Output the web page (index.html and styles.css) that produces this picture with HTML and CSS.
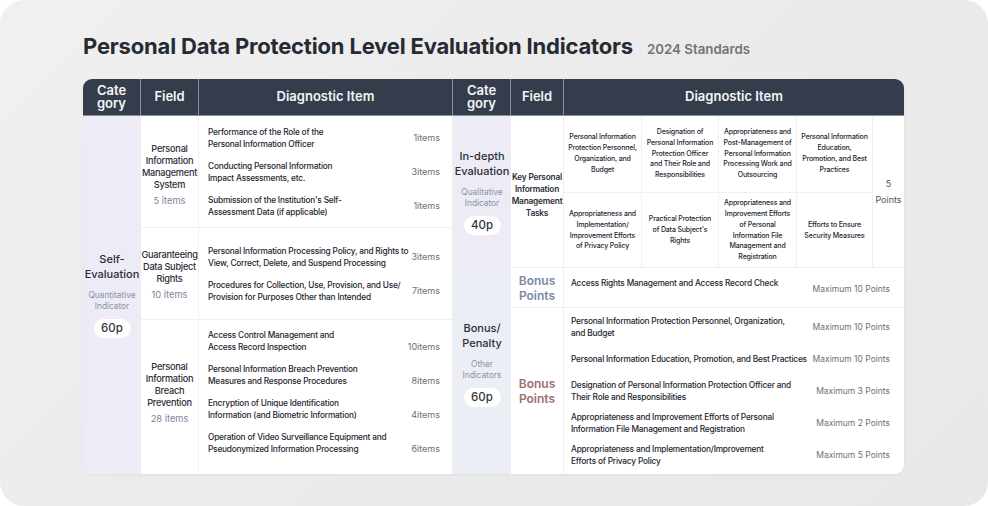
FILE: index.html
```html
<!DOCTYPE html>
<html>
<head>
<meta charset="utf-8">
<link rel="stylesheet" href="styles.css">
</head>
<body>
<div class="frame">
  <div class="title-row">
    <h1 class="title">Personal Data Protection Level Evaluation Indicators</h1>
    <span class="subtitle">2024 Standards</span>
  </div>
  <div class="sheet">
    <div class="half half-left">
      <div class="hcell">Cate<br>gory</div>
      <div class="hcell">Field</div>
      <div class="hcell hcell-last">Diagnostic Item</div>

      <div class="cat cat-self">
        <div class="cat-name">Self-<br>Evaluation</div>
        <div class="cat-sub">Quantitative<br>Indicator</div>
        <div class="pill">60p</div>
      </div>

      <div class="field g1">
        <div class="field-name">Personal<br>Information<br>Management<br>System</div>
        <div class="field-count">5 items</div>
      </div>
      <div class="diag g1">
        <div class="item"><span>Performance of the Role of the<br>Personal Information Officer</span><span class="cnt">1items</span></div>
        <div class="item"><span>Conducting Personal Information<br>Impact Assessments, etc.</span><span class="cnt">3items</span></div>
        <div class="item"><span>Submission of the Institution's Self-<br>Assessment Data (if applicable)</span><span class="cnt">1items</span></div>
      </div>

      <div class="field g2">
        <div class="field-name">Guaranteeing<br>Data Subject<br>Rights</div>
        <div class="field-count">10 items</div>
      </div>
      <div class="diag g2">
        <div class="item"><span>Personal Information Processing Policy, and Rights to<br>View, Correct, Delete, and Suspend Processing</span><span class="cnt">3items</span></div>
        <div class="item"><span>Procedures for Collection, Use, Provision, and Use/<br>Provision for Purposes Other than Intended</span><span class="cnt">7items</span></div>
      </div>

      <div class="field g3">
        <div class="field-name">Personal<br>Information<br>Breach<br>Prevention</div>
        <div class="field-count">28 items</div>
      </div>
      <div class="diag g3">
        <div class="item item-end"><span>Access Control Management and<br>Access Record Inspection</span><span class="cnt">10items</span></div>
        <div class="item item-end"><span>Personal Information Breach Prevention<br>Measures and Response Procedures</span><span class="cnt">8items</span></div>
        <div class="item item-end"><span>Encryption of Unique Identification<br>Information (and Biometric Information)</span><span class="cnt">4items</span></div>
        <div class="item item-end"><span>Operation of Video Surveillance Equipment and<br>Pseudonymized Information Processing</span><span class="cnt">6items</span></div>
      </div>
    </div>

    <div class="half half-right">
      <div class="hcell">Cate<br>gory</div>
      <div class="hcell">Field</div>
      <div class="hcell hcell-last">Diagnostic Item</div>

      <div class="cat cat-deep">
        <div class="cat-name">In-depth<br>Evaluation</div>
        <div class="cat-sub">Qualitative<br>Indicator</div>
        <div class="pill">40p</div>
      </div>
      <div class="field r1">
        <div class="field-name field-small">Key Personal<br>Information<br>Management<br>Tasks</div>
      </div>
      <div class="matrix r1">
        <div class="mcell">Personal Information<br>Protection Personnel,<br>Organization, and<br>Budget</div>
        <div class="mcell">Designation of<br>Personal Information<br>Protection Officer<br>and Their Role and<br>Responsibilities</div>
        <div class="mcell">Appropriateness and<br>Post-Management of<br>Personal Information<br>Processing Work and<br>Outsourcing</div>
        <div class="mcell">Personal Information<br>Education,<br>Promotion, and Best<br>Practices</div>
        <div class="mcell mpoints">5<br>Points</div>
        <div class="mcell">Appropriateness and<br>Implementation/<br>Improvement Efforts<br>of Privacy Policy</div>
        <div class="mcell">Practical Protection<br>of Data Subject's<br>Rights</div>
        <div class="mcell">Appropriateness and<br>Improvement Efforts<br>of Personal<br>Information File<br>Management and<br>Registration</div>
        <div class="mcell">Efforts to Ensure<br>Security Measures</div>
      </div>

      <div class="cat cat-bonus">
        <div class="cat-name">Bonus/<br>Penalty</div>
        <div class="cat-sub">Other<br>Indicators</div>
        <div class="pill">60p</div>
      </div>
      <div class="field r2">
        <div class="pts-label pts-plus">Bonus<br>Points</div>
      </div>
      <div class="diag r2">
        <div class="bitem bitem-top"><span>Access Rights Management and Access Record Check</span><span class="max">Maximum 10 Points</span></div>
      </div>
      <div class="field r3">
        <div class="pts-label pts-minus">Bonus<br>Points</div>
      </div>
      <div class="diag r3">
        <div class="bitem"><span>Personal Information Protection Personnel, Organization,<br>and Budget</span><span class="max">Maximum 10 Points</span></div>
        <div class="bitem"><span>Personal Information Education, Promotion, and Best Practices</span><span class="max">Maximum 10 Points</span></div>
        <div class="bitem"><span>Designation of Personal Information Protection Officer and<br>Their Role and Responsibilities</span><span class="max">Maximum 3 Points</span></div>
        <div class="bitem"><span>Appropriateness and Improvement Efforts of Personal<br>Information File Management and Registration</span><span class="max">Maximum 2 Points</span></div>
        <div class="bitem"><span>Appropriateness and Implementation/Improvement<br>Efforts of Privacy Policy</span><span class="max">Maximum 5 Points</span></div>
      </div>
    </div>
  </div>
</div>
</body>
</html>
```

FILE: styles.css
```css
* { box-sizing: border-box; }
html, body { margin: 0; padding: 0; background: #ffffff; }
body { font-family: Inter, "Noto Sans", sans-serif; color: #2a2e37; }

.frame {
  width: 988px;
  height: 506px;
  border-radius: 24px;
  background: linear-gradient(135deg, #f0f0f0 0%, #eaeaea 60%, #e8e8e8 100%);
  padding: 33px 84px 32px 83px;
}

.title-row {
  display: flex;
  align-items: baseline;
  gap: 14px;
  height: 27px;
  margin-bottom: 19px;
}
.title {
  margin: 0;
  font-size: 22px;
  font-weight: 700;
  letter-spacing: -0.18px;
  color: #262a33;
  line-height: 27px;
}
.subtitle {
  font-size: 13.3px;
  font-weight: 600;
  color: #737373;
}

.sheet {
  display: flex;
  width: 821px;
  height: 395px;
  background: #fff;
  border-radius: 9px;
  overflow: hidden;
  box-shadow: 0 1px 3px rgba(0,0,0,0.05);
}

.half { display: grid; }
.half-left {
  width: 370px;
  grid-template-columns: 58px 58px 254px;
  grid-template-rows: 37px 112px 92px 154px;
}
.half-right {
  width: 451px;
  grid-template-columns: 58px 53px 340px;
  grid-template-rows: 37px 152px 40px 166px;
}

.hcell {
  background: #353d4c;
  color: #f4f5f7;
  font-size: 13px;
  font-weight: 600;
  line-height: 13.5px;
  display: flex;
  align-items: center;
  justify-content: center;
  text-align: center;
  border-right: 1px solid #8a909b;
  border-bottom: 1px solid #8a909b;
}
.half-right .hcell-last { border-right: none; }

.cat {
  display: flex;
  flex-direction: column;
  align-items: center;
  justify-content: center;
  text-align: center;
}
.cat-self { grid-row: 2 / 5; background: #ecebf6; }
.cat-deep { grid-row: 2 / 3; background: #ecebf6; }
.cat-bonus { grid-row: 3 / 5; background: #ebeef4; padding-bottom: 15px; }
.cat-name {
  font-size: 11px;
  font-weight: 500;
  line-height: 15px;
  color: #2a2e37;
}
.cat-sub {
  margin-top: 8px;
  font-size: 8.3px;
  line-height: 11px;
  color: #8a93a3;
}
.pill {
  margin-top: 7px;
  background: #fff;
  border-radius: 10px;
  width: 37px;
  height: 19px;
  font-size: 11.5px;
  font-weight: 500;
  line-height: 19px;
  color: #30343c;
}

.field {
  display: flex;
  flex-direction: column;
  align-items: center;
  justify-content: center;
  text-align: center;
  border-right: 1px solid #eef0f4;
  white-space: nowrap;
}
.field-name {
  font-size: 9.2px;
  font-weight: 500;
  letter-spacing: -0.25px;
  line-height: 12px;
  color: #2a2e37;
}
.g1.field { padding-top: 6px; }
.g2.field { padding-top: 2px; }
.g3.field { padding-top: 2px; }
.field-small { font-size: 8.3px; font-weight: 600; margin-top: 6px; letter-spacing: -0.2px; }
.field-count {
  margin-top: 4px;
  font-size: 9.3px;
  line-height: 12px;
  color: #7c869a;
}
.g1, .g2 { border-bottom: 1px solid #eef0f4; }
.r1, .r2 { border-bottom: 1px solid #eef0f4; }

.diag {
  display: flex;
  flex-direction: column;
  justify-content: center;
  gap: 10px;
  padding: 0 12px 0 9px;
}
.half-left .diag { border-right: 1px solid #eef0f4; }
.g3 { padding-bottom: 10px; }
.item {
  display: flex;
  justify-content: space-between;
  align-items: center;
  font-size: 8.3px;
  font-weight: 500;
  letter-spacing: -0.2px;
  line-height: 12px;
  color: #23272f;
  white-space: nowrap;
}
.item-end { align-items: flex-end; }
.cnt {
  font-size: 9px;
  font-weight: 400;
  letter-spacing: 0;
  color: #6e6e6e;
}

.matrix {
  display: grid;
  grid-template-columns: 78px 77px 78px 76px 31px;
  grid-template-rows: 77px 75px;
}
.mcell {
  display: flex;
  align-items: center;
  justify-content: center;
  text-align: center;
  font-size: 7px;
  font-weight: 500;
  letter-spacing: -0.15px;
  line-height: 10.8px;
  color: #23272f;
  white-space: nowrap;
  border-right: 1px solid #eef0f4;
  border-bottom: 1px solid #eef0f4;
}
.mpoints {
  grid-column: 5;
  grid-row: 1 / 3;
  border-right: none;
  border-bottom: none;
  font-size: 9px;
  letter-spacing: 0;
  line-height: 16px;
  color: #555;
  font-weight: 400;
}
.mcell:nth-child(n+6) { border-bottom: none; }

.pts-label {
  font-size: 12px;
  font-weight: 600;
  line-height: 15px;
}
.pts-plus { color: #7b8aa3; }
.pts-minus { color: #9d6f6f; }

.half-right .diag { padding: 0 14px 0 7px; }
.r2.diag { justify-content: flex-start; padding-top: 9px; }
.r3.diag { gap: 8px; }
.bitem {
  display: flex;
  justify-content: space-between;
  align-items: center;
  min-height: 24px;
  font-size: 8.3px;
  font-weight: 500;
  letter-spacing: -0.2px;
  line-height: 12px;
  color: #23272f;
  white-space: nowrap;
}
.bitem-top { align-items: flex-start; min-height: 0; }
.bitem-top .max { margin-top: 6px; }
.max {
  font-size: 8.5px;
  font-weight: 400;
  letter-spacing: 0;
  color: #6f6f6f;
  white-space: nowrap;
}
```
